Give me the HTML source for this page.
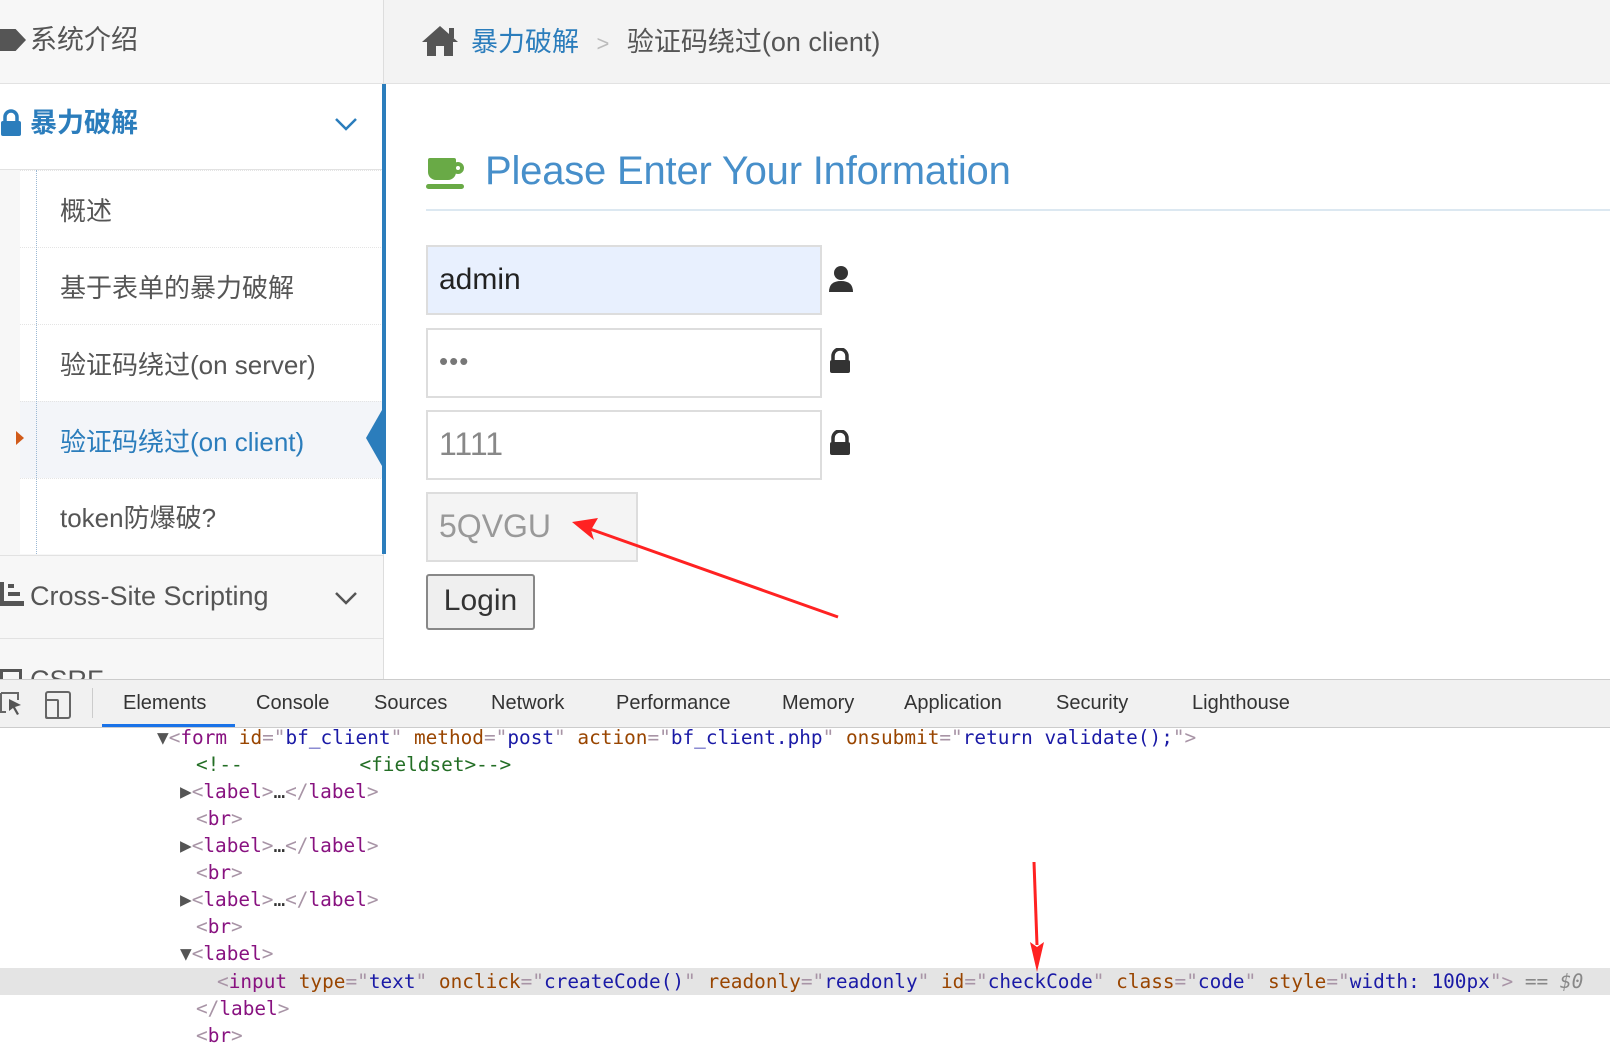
<!DOCTYPE html>
<html><head><meta charset="utf-8"><style>
*{margin:0;padding:0;box-sizing:border-box}
body{width:1610px;height:1045px;overflow:hidden;background:#fff;font-family:"Liberation Sans","Noto Sans CJK SC",sans-serif;position:relative}
.abs{position:absolute}
.side{left:0;top:0;width:384px;height:680px;background:#f7f7f7;border-right:1px solid #ddd;overflow:hidden}
.row{position:absolute;left:0;width:383px;display:flex;align-items:center;font-size:27px;color:#555}
.sub{position:absolute;left:20px;width:363px;background:#fff;border-top:1px dotted #e4e4e4;font-size:26px;color:#555;display:flex;align-items:center;padding-left:40px}
.code{font-family:"DejaVu Sans Mono","Liberation Mono",monospace;font-size:19.4px;white-space:pre;position:absolute;line-height:26px}
.t{color:#881280}.a{color:#994500}.v{color:#1a1aa6}.b{color:#a894a6}.c{color:#236e25}
.tab{position:absolute;top:692px;font-size:20px;color:#333}
</style></head><body>
<div class="abs" style="left:0;top:0;width:1610px;height:84px;background:#f3f3f3;border-bottom:1px solid #e2e2e2"></div>
<div class="side abs">
  <div class="row" style="top:0;height:84px;border-bottom:1px solid #e2e2e2"></div>
  <div class="row" style="top:84px;height:86px;background:#fff;border-bottom:1px solid #e2e2e2"></div>
  <div class="sub" style="top:170px;height:77px">概述</div>
  <div class="sub" style="top:247px;height:77px">基于表单的暴力破解</div>
  <div class="sub" style="top:324px;height:77px">验证码绕过(on server)</div>
  <div class="sub" style="top:401px;height:77px;background:#f3f5f9;color:#2b7dbc">验证码绕过(on client)</div>
  <div class="sub" style="top:478px;height:76px">token防爆破?</div>
  <div class="abs" style="left:36px;top:170px;height:384px;border-left:1px dotted #9bb8d4"></div>
  <div class="row" style="top:555px;height:84px;border-top:1px solid #e2e2e2;border-bottom:1px solid #e2e2e2"></div>
</div>
<div class="abs" style="left:0;top:18px;font-size:27px;color:#555;line-height:44px"><span style="display:inline-block;width:26px;height:22px;background:#555;clip-path:polygon(0 0,60% 0,100% 50%,60% 100%,0 100%);vertical-align:-2px;margin-right:4px"></span>系统介绍</div>
<svg class="abs" style="left:0;top:109px" width="22" height="28"><path d="M5 13 V8 A6 6 0 0 1 17 8 V13" stroke="#2b7dbc" stroke-width="3.5" fill="none"/><rect x="1" y="12" width="20" height="15" rx="2" fill="#2b7dbc"/></svg>
<div class="abs" style="left:30px;top:103px;font-size:27px;color:#2b7dbc;font-weight:bold;line-height:40px">暴力破解</div>
<svg class="abs" style="left:334px;top:116px" width="24" height="16"><path d="M2 3 L12 13 L22 3" stroke="#2b7dbc" stroke-width="2.5" fill="none"/></svg>
<div class="abs" style="left:16px;top:431px;width:0;height:0;border-left:8px solid #d15b1a;border-top:7px solid transparent;border-bottom:7px solid transparent"></div>
<div class="abs" style="left:382px;top:84px;width:4px;height:470px;background:#2b7dbc"></div>
<div class="abs" style="left:366px;top:410px;width:0;height:0;border-right:16px solid #2b7dbc;border-top:28px solid transparent;border-bottom:28px solid transparent"></div>
<svg class="abs" style="left:0;top:582px" width="26" height="24"><rect x="0" y="0" width="4" height="24" fill="#555"/><rect x="8" y="2" width="6" height="4" fill="#555"/><rect x="8" y="10" width="12" height="4" fill="#555"/><rect x="4" y="19" width="20" height="5" fill="#555"/></svg>
<div class="abs" style="left:30px;top:576px;font-size:27px;color:#555;line-height:40px">Cross-Site Scripting</div>
<svg class="abs" style="left:334px;top:590px" width="24" height="16"><path d="M2 3 L12 13 L22 3" stroke="#555" stroke-width="2.5" fill="none"/></svg>
<div class="abs" style="left:0;top:660px;font-size:27px;color:#555;line-height:40px;height:20px;overflow:hidden"><span style="display:inline-block;width:22px;height:20px;border:3px solid #555;margin-right:8px"></span>CSRF</div>
<svg class="abs" style="left:420px;top:24px" width="40" height="34"><path d="M20 2 L2 18 L7 18 L7 32 L16 32 L16 22 L24 22 L24 32 L33 32 L33 18 L38 18 Z" fill="#555"/><rect x="29" y="4" width="5" height="10" fill="#555"/></svg>
<div class="abs" style="left:471px;top:20px;font-size:27px;line-height:44px;color:#555"><span style="color:#2b7dbc">暴力破解</span> <span style="color:#bbb;margin:0 10px;font-size:22px">&gt;</span> 验证码绕过(on client)</div>
<div class="abs" style="left:426px;top:156px;width:40px;height:34px"><div class="abs" style="left:2px;top:2px;width:28px;height:22px;background:#69aa46;border-radius:2px 2px 8px 8px"></div><div class="abs" style="left:26px;top:6px;width:12px;height:12px;border:4px solid #69aa46;border-radius:6px"></div><div class="abs" style="left:0;top:28px;width:38px;height:5px;background:#69aa46;border-radius:3px"></div></div>
<div class="abs" style="left:485px;top:146px;font-size:40px;color:#478fca;line-height:50px;letter-spacing:-0.2px">Please Enter Your Information</div>
<div class="abs" style="left:426px;top:209px;width:1184px;height:2px;background:#dce8f1"></div>
<div class="abs" style="left:426px;top:245px;width:396px;height:70px;background:#e8f0fe;border:2px solid #ddd;font-size:30px;color:#222;padding:16px 11px">admin</div>
<div class="abs" style="left:426px;top:328px;width:396px;height:70px;border:2px solid #ddd;font-size:26px;color:#777;padding:16px 11px;letter-spacing:1px">•••</div>
<div class="abs" style="left:426px;top:410px;width:396px;height:70px;border:2px solid #ddd;font-size:32px;color:#888;padding:14px 11px">1111</div>
<div class="abs" style="left:426px;top:492px;width:212px;height:70px;background:#f4f4f4;border:2px solid #ddd;font-size:32px;color:#999;padding:14px 11px">5QVGU</div>
<div class="abs" style="left:426px;top:574px;width:109px;height:56px;background:#efefef;border:2px solid #888;border-radius:3px;font-size:30px;color:#333;text-align:center;line-height:50px">Login</div>
<svg class="abs" style="left:828px;top:264px" width="30" height="32"><circle cx="13" cy="9" r="7" fill="#333"/><path d="M1 28 Q1 17 13 17 Q25 17 25 28 Z" fill="#333"/></svg>
<svg class="abs" style="left:828px;top:348px" width="24" height="28"><path d="M5 12 V8 A7 7 0 0 1 19 8 V12" stroke="#333" stroke-width="3.5" fill="none"/><rect x="2" y="12" width="20" height="13" rx="2" fill="#333"/></svg>
<svg class="abs" style="left:828px;top:430px" width="24" height="28"><path d="M5 12 V8 A7 7 0 0 1 19 8 V12" stroke="#333" stroke-width="3.5" fill="none"/><rect x="2" y="12" width="20" height="13" rx="2" fill="#333"/></svg>
<div class="abs" style="left:0;top:679px;width:1610px;height:49px;background:#f1f1f1;border-top:1px solid #ccc;border-bottom:1px solid #ccc"></div>
<svg class="abs" style="left:0;top:690px" width="80" height="30"><path d="M1 3 H18 V10 M1 3 V22 H6" stroke="#666" stroke-width="2" fill="none"/><path d="M9 9 L21 15 L15 17 L19 24 L17 25 L13 18 L9 21 Z" fill="#555"/><rect x="46" y="2" width="24" height="26" rx="2" stroke="#666" stroke-width="2" fill="none"/><rect x="46" y="10" width="12" height="18" rx="1" stroke="#666" stroke-width="2" fill="none"/></svg>
<div class="abs" style="left:92px;top:688px;width:1px;height:30px;background:#ccc"></div>
<div class="tab" style="left:123px">Elements</div>
<div class="tab" style="left:256px">Console</div>
<div class="tab" style="left:374px">Sources</div>
<div class="tab" style="left:491px">Network</div>
<div class="tab" style="left:616px">Performance</div>
<div class="tab" style="left:782px">Memory</div>
<div class="tab" style="left:904px">Application</div>
<div class="tab" style="left:1056px">Security</div>
<div class="tab" style="left:1192px">Lighthouse</div>
<div class="abs" style="left:102px;top:724px;width:133px;height:3px;background:#1a73e8"></div>
<div class="abs" style="left:0;top:968px;width:1610px;height:27px;background:#e4e4e4"></div>
<div class="code" style="left:157px;top:725px"><span style="color:#555">▼</span><span class="t"><span class="b">&lt;</span>form</span> <span class="a">id</span><span class="b">="</span><span class="v">bf_client</span><span class="b">"</span> <span class="a">method</span><span class="b">="</span><span class="v">post</span><span class="b">"</span> <span class="a">action</span><span class="b">="</span><span class="v">bf_client.php</span><span class="b">"</span> <span class="a">onsubmit</span><span class="b">="</span><span class="v">return validate();</span><span class="b">"&gt;</span></div>
<div class="code c" style="left:196px;top:752px">&lt;!--          &lt;fieldset&gt;--&gt;</div>
<div class="code" style="left:180px;top:779px"><span style="color:#555">▶</span><span class="t"><span class="b">&lt;</span>label<span class="b">&gt;</span></span><span style="color:#333">…</span><span class="t"><span class="b">&lt;/</span>label<span class="b">&gt;</span></span></div>
<div class="code t" style="left:196px;top:806px"><span class="b">&lt;</span>br<span class="b">&gt;</span></div>
<div class="code" style="left:180px;top:833px"><span style="color:#555">▶</span><span class="t"><span class="b">&lt;</span>label<span class="b">&gt;</span></span><span style="color:#333">…</span><span class="t"><span class="b">&lt;/</span>label<span class="b">&gt;</span></span></div>
<div class="code t" style="left:196px;top:860px"><span class="b">&lt;</span>br<span class="b">&gt;</span></div>
<div class="code" style="left:180px;top:887px"><span style="color:#555">▶</span><span class="t"><span class="b">&lt;</span>label<span class="b">&gt;</span></span><span style="color:#333">…</span><span class="t"><span class="b">&lt;/</span>label<span class="b">&gt;</span></span></div>
<div class="code t" style="left:196px;top:914px"><span class="b">&lt;</span>br<span class="b">&gt;</span></div>
<div class="code" style="left:180px;top:941px"><span style="color:#555">▼</span><span class="t"><span class="b">&lt;</span>label<span class="b">&gt;</span></span></div>
<div class="code" style="left:217px;top:969px"><span class="t"><span class="b">&lt;</span>input</span> <span class="a">type</span><span class="b">="</span><span class="v">text</span><span class="b">"</span> <span class="a">onclick</span><span class="b">="</span><span class="v">createCode()</span><span class="b">"</span> <span class="a">readonly</span><span class="b">="</span><span class="v">readonly</span><span class="b">"</span> <span class="a">id</span><span class="b">="</span><span class="v">checkCode</span><span class="b">"</span> <span class="a">class</span><span class="b">="</span><span class="v">code</span><span class="b">"</span> <span class="a">style</span><span class="b">="</span><span class="v">width: 100px</span><span class="b">"&gt;</span> <span style="color:#888">== <i>$0</i></span></div>
<div class="code t" style="left:196px;top:996px"><span class="b">&lt;/</span>label<span class="b">&gt;</span></div>
<div class="code t" style="left:196px;top:1023px"><span class="b">&lt;</span>br<span class="b">&gt;</span></div>
<svg class="abs" style="left:0;top:0" width="1610" height="1045">
<line x1="838" y1="617" x2="590" y2="529" stroke="#f22" stroke-width="3"/>
<path d="M572 522 L598 518 L591 530 L594 540 Z" fill="#f22"/>
<line x1="1034" y1="862" x2="1037" y2="945" stroke="#f22" stroke-width="3"/>
<path d="M1037 972 L1030 942 L1037 947 L1044 942 Z" fill="#f22"/>
</svg>
</body></html>
